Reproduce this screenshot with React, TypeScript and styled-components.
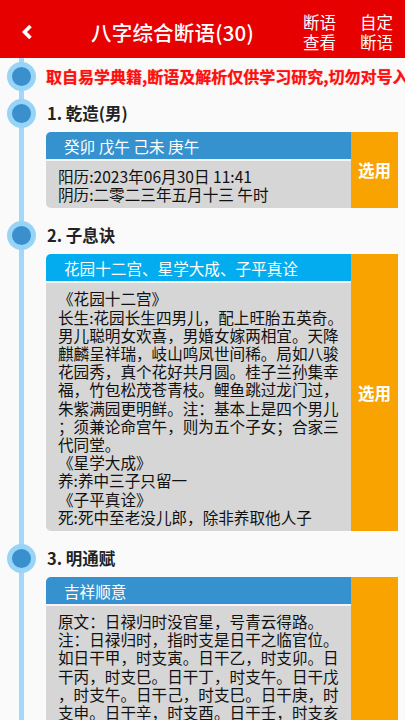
import styled, { createGlobalStyle } from "styled-components";

const GlobalStyle = createGlobalStyle`
  html, body {
    margin: 0;
    padding: 0;
    background: #fafafa;
    font-family: "Noto Sans CJK SC", "Noto Sans", sans-serif;
  }
  * {
    box-sizing: border-box;
  }
`;

type Entry = {
  title: string;
  head: string;
  headTone?: "blue" | "cyan";
  lines: string[];
};

const ENTRIES: Entry[] = [
  {
    title: "1.  乾造(男)",
    head: "癸卯 戊午 己未 庚午",
    lines: ["阳历:2023年06月30日 11:41", "阴历:二零二三年五月十三 午时"],
  },
  {
    title: "2.  子息诀",
    head: "花园十二宫、星学大成、子平真诠",
    headTone: "cyan",
    lines: [
      "《花园十二宫》",
      "长生:花园长生四男儿，配上旺胎五英奇。",
      "男儿聪明女欢喜，男婚女嫁两相宜。天降",
      "麒麟呈祥瑞，岐山鸣凤世间稀。局如八骏",
      "花园秀，真个花好共月圆。桂子兰孙集幸",
      "福，竹包松茂苍青枝。鲤鱼跳过龙门过，",
      "朱紫满园更明鲜。注：基本上是四个男儿",
      "；须兼论命宫午，则为五个子女；合家三",
      "代同堂。",
      "《星学大成》",
      "养:养中三子只留一",
      "《子平真诠》",
      "死:死中至老没儿郎，除非养取他人子",
    ],
  },
  {
    title: "3.  明通赋",
    head: "吉祥顺意",
    lines: [
      "原文：日禄归时没官星，号青云得路。",
      "注：日禄归时，指时支是日干之临官位。",
      "如日干甲，时支寅。日干乙，时支卯。日",
      "干丙，时支巳。日干丁，时支午。日干戊",
      "，时支午。日干己，时支巳。日干庚，时",
      "支申。日干辛，时支酉。日干壬，时支亥",
      "。日干癸，时支子。此格局者，必须四柱",
      "中无官星，方为贵格。若有官星，则主平",
      "常。如日干甲，时支寅，四柱不见庚辛金",
      "，则主青云得路，富贵双全。",
      "解析：日禄归时格，喜身强财旺，忌官星",
      "透出，亦忌刑冲破害。大运行财乡，主功",
      "名显达，一生顺遂。若逢官杀混杂，则主",
      "劳碌奔波，须看大运流年之喜忌而定。",
      "此格取用，重在日主之强弱与时支之禄",
      "神是否受伤，禄神无伤，方为上格。",
    ],
  },
];

const App: React.FC = () => {
  return (
    <>
      <GlobalStyle />
      <Page>
        <Header>
          <BackButton>
            <svg width="12" height="16" viewBox="0 0 12 16">
              <path
                d="M9.5 2 L3.5 8 L9.5 14"
                fill="none"
                stroke="#fff"
                strokeWidth="3.6"
              />
            </svg>
          </BackButton>
          <Title>八字综合断语(30)</Title>
          <HeaderActions>
            <HeaderAction>
              断语
              <br />
              查看
            </HeaderAction>
            <HeaderAction>
              自定
              <br />
              断语
            </HeaderAction>
          </HeaderActions>
        </Header>

        <Timeline>
          <NoticeRow>
            <Rail>
              <Dot />
            </Rail>
            <NoticeClip>
              <NoticeText>
                断语均取自易学典籍,断语及解析仅供学习研究,切勿对号入座
              </NoticeText>
            </NoticeClip>
          </NoticeRow>

          {ENTRIES.map((entry) => (
            <Item key={entry.title}>
              <Rail>
                <Dot />
              </Rail>
              <Content>
                <ItemTitle>{entry.title}</ItemTitle>
                <Card>
                  <CardMain>
                    <CardHead tone={entry.headTone ?? "blue"}>
                      {entry.head}
                    </CardHead>
                    <CardBody>
                      {entry.lines.map((line, i) => (
                        <Line key={i}>{line}</Line>
                      ))}
                    </CardBody>
                  </CardMain>
                  <SelectButton>选用</SelectButton>
                </Card>
              </Content>
            </Item>
          ))}
        </Timeline>
      </Page>
    </>
  );
};

const Page = styled.div`
  width: 405px;
  height: 720px;
  overflow: hidden;
  background: #fafafa;
`;

const Header = styled.header`
  height: 58px;
  padding-top: 6px;
  background: #e60000;
  display: flex;
  align-items: center;
  color: #fff;
`;

const BackButton = styled.div`
  width: 56px;
  height: 100%;
  display: flex;
  align-items: center;
  padding-left: 21px;
`;

const Title = styled.h1`
  flex: 1;
  margin: 0;
  text-align: center;
  font-size: 20.5px;
  font-weight: 500;
  letter-spacing: 0.2px;
`;

const HeaderActions = styled.div`
  display: flex;
  gap: 24px;
  padding-right: 12px;
  padding-left: 14px;
`;

const HeaderAction = styled.div`
  font-size: 16.5px;
  line-height: 20px;
  text-align: center;
`;

const railLine = `
  background-image: linear-gradient(#a3d8f8, #a3d8f8);
  background-repeat: no-repeat;
  background-position: 19px 0;
  background-size: 5px 100%;
`;

const Timeline = styled.div`
  display: flex;
  flex-direction: column;
`;

const NoticeRow = styled.div`
  display: flex;
  height: 39px;
  padding-bottom: 3px;
  ${railLine}
`;

const Rail = styled.div`
  width: 46px;
  flex-shrink: 0;
  height: 36px;
  display: flex;
  align-items: center;
  padding-left: 7px;
`;

const Dot = styled.div`
  width: 29px;
  height: 29px;
  border-radius: 50%;
  background: #3a8fcd;
  border: 5.5px solid #98d4f8;
`;

const NoticeClip = styled.div`
  flex: 1;
  overflow: hidden;
  display: flex;
  align-items: center;
`;

const NoticeText = styled.div`
  margin-left: -48px;
  white-space: nowrap;
  color: #ff1010;
  font-size: 16px;
  font-weight: 700;
  text-shadow: 0 0 1px rgba(255, 0, 0, 0.6);
`;

const Item = styled.div`
  display: flex;
  padding-bottom: 11px;
  ${railLine}

  & > ${Rail} {
    height: 32px;
  }
`;

const Content = styled.div`
  flex: 1;
  min-width: 0;
  padding-right: 7px;
`;

const ItemTitle = styled.div`
  height: 32px;
  display: flex;
  align-items: center;
  padding-left: 1px;
  font-size: 16.5px;
  font-weight: 700;
  color: #222;
`;

const Card = styled.div`
  margin-top: 3px;
  display: flex;
  border-radius: 5px 0 0 5px;
  overflow: hidden;
`;

const CardMain = styled.div`
  flex: 1;
  min-width: 0;
  background: #d6d6d6;
`;

const CardHead = styled.div<{ tone: "blue" | "cyan" }>`
  height: 29px;
  padding-left: 18px;
  display: flex;
  align-items: center;
  font-size: 15.6px;
  color: #fff;
  background: ${({ tone }) => (tone === "cyan" ? "#03acef" : "#3592cf")};
  border-bottom: 2px solid #f4f4f4;
`;

const CardBody = styled.div`
  padding: 6px 6px 5px 12px;
  font-size: 15.6px;
  line-height: 18.2px;
  color: #111;
`;

const Line = styled.div`
  white-space: nowrap;
`;

const SelectButton = styled.div`
  width: 47px;
  flex-shrink: 0;
  background: #f9a300;
  color: #fff;
  font-size: 16.5px;
  font-weight: 700;
  display: flex;
  align-items: center;
  justify-content: center;
`;

export default App;
